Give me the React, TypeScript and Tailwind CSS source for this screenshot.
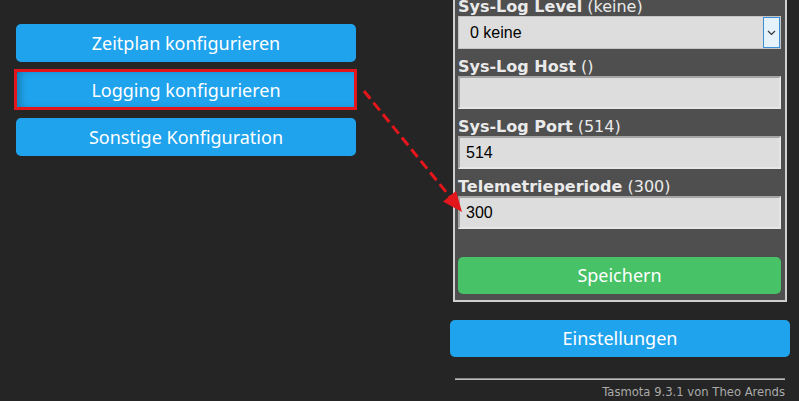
import React from "react";

const btnFont = { fontFamily: '"Noto Sans", "Open Sans", sans-serif' };

function Field({
  label,
  hint,
  children,
}: {
  label: string;
  hint: string;
  children: React.ReactNode;
}) {
  return (
    <div>
      <div
        className="h-[27px] flex items-end text-[16px] leading-[19px] text-[#eaeaea] whitespace-nowrap"
        style={{ fontFamily: '"DejaVu Sans", Verdana, sans-serif' }}
      >
        <span className="font-bold">{label}</span>
        <span>&nbsp;{hint}</span>
      </div>
      {children}
    </div>
  );
}

function TextInput({ value }: { value: string }) {
  return (
    <div
      className="h-[33px] bg-[#dddddd] border-2 border-t-[#a5a5a5] border-l-[#a5a5a5] border-b-[#e6e6e6] border-r-[#e6e6e6] flex items-center pl-[6px] text-[16px] text-black"
      style={{ fontFamily: '"Liberation Sans", Arial, sans-serif' }}
    >
      {value}
    </div>
  );
}

export default function App() {
  return (
    <div className="relative w-[799px] h-[401px] overflow-hidden bg-[#252525]">
      <div className="flex">
        {/* left column */}
        <div className="ml-[16px] w-[340px] pt-[24px] flex flex-col gap-[9px]">
          <button
            className="h-[38px] w-full rounded-[5px] bg-[#1fa3ec] text-white text-[18px]"
            style={btnFont}
          >
            Zeitplan konfigurieren
          </button>
          <div className="relative">
            <button
              className="h-[38px] w-full rounded-[5px] bg-[#1fa3ec] text-white text-[18px] shadow-[inset_5px_0_6px_rgba(0,0,0,0.22)]"
              style={btnFont}
            >
              Logging konfigurieren
            </button>
            <div className="absolute -top-[2px] -bottom-[1px] -left-[2px] -right-[1px] border-[3px] border-[#e3161b] pointer-events-none" />
          </div>
          <button
            className="h-[38px] w-full rounded-[5px] bg-[#1fa3ec] text-white text-[18px]"
            style={btnFont}
          >
            Sonstige Konfiguration
          </button>
        </div>

        {/* right column */}
        <div className="ml-auto mr-[9px] w-[340px]">
          <div className="mt-[-20px] mx-[3px] border-2 border-[#cfcfcf] bg-[#4f4f4f] pt-[7px] pb-[6px] pl-[3px] pr-[4px]">
            <Field label="Sys-Log Level" hint="(keine)">
              <div
                className="h-[33px] bg-[#dddddd] border border-[#c4c4c4] flex items-center text-[16px] text-black"
                style={{ fontFamily: '"Liberation Sans", Arial, sans-serif' }}
              >
                <span className="flex-1 pl-[11px] pt-[1px]">0 keine</span>
                <div className="w-[17px] h-full bg-[#e5f1fb] border border-[#3d8ed8] flex items-center justify-center">
                  <svg width="9" height="6" viewBox="0 0 9 6">
                    <polyline
                      points="1,1 4.5,4.5 8,1"
                      fill="none"
                      stroke="#333"
                      strokeWidth="1.2"
                    />
                  </svg>
                </div>
              </div>
            </Field>
            <Field label="Sys-Log Host" hint="()">
              <TextInput value="" />
            </Field>
            <Field label="Sys-Log Port" hint="(514)">
              <TextInput value="514" />
            </Field>
            <Field label="Telemetrieperiode" hint="(300)">
              <TextInput value="300" />
            </Field>
            <button
              className="mt-[28px] h-[37px] w-full rounded-[5px] bg-[#47c266] text-white text-[18px]"
              style={btnFont}
            >
              Speichern
            </button>
          </div>

          <button
            className="mt-[18px] h-[37px] w-full rounded-[5px] bg-[#1fa3ec] text-white text-[18px]"
            style={btnFont}
          >
            Einstellungen
          </button>

          <div className="mt-[21px] mx-[5px] h-[2px] border-t border-t-[#8a8a8a] border-b border-b-[#bdbdbd]" />
          <div
            className="mt-[6px] pr-[5px] text-right text-[11.6px] leading-[13px] text-[#aaaaaa]"
            style={{ fontFamily: '"DejaVu Sans", Verdana, sans-serif' }}
          >
            Tasmota 9.3.1 von Theo Arends
          </div>
        </div>
      </div>

      {/* annotation arrow */}
      <svg
        className="absolute inset-0 pointer-events-none"
        width="799"
        height="401"
        viewBox="0 0 799 401"
      >
        <line
          x1="364"
          y1="91"
          x2="451"
          y2="198"
          stroke="#e3161b"
          strokeWidth="3"
          strokeDasharray="10 5"
        />
        <polygon points="462,212 443,201.5 456,191" fill="#e3161b" />
      </svg>
    </div>
  );
}
